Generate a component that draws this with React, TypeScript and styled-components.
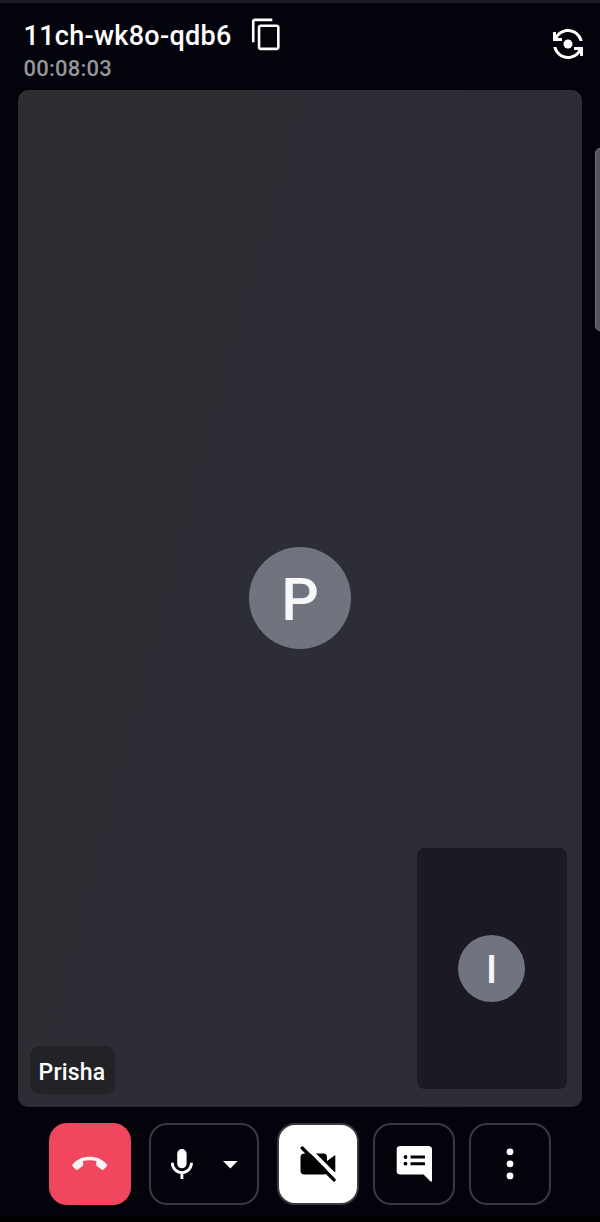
import React from "react";
import styled, { createGlobalStyle } from "styled-components";

const GlobalStyle = createGlobalStyle`
  * { box-sizing: border-box; }
  body { margin: 0; background: #03040b; }
`;

const Screen = styled.div`
  position: relative;
  width: 600px;
  height: 1222px;
  overflow: hidden;
  display: flex;
  flex-direction: column;
  background: #03040b;
  border-top: 3px solid #1a1b22;
  border-bottom: 5px solid #000;
  font-family: Roboto, "Liberation Sans", sans-serif;
  color: #fff;
`;

const Header = styled.header`
  height: 87px;
  flex: none;
  display: flex;
  justify-content: space-between;
  align-items: flex-start;
  padding: 14px 14px 0 23.5px;
`;

const Meeting = styled.div`
  display: flex;
  flex-direction: column;
`;

const TitleRow = styled.div`
  display: flex;
  align-items: center;
  height: 36px;
  gap: 18px;
`;

const Title = styled.h1`
  margin: 0;
  padding-top: 2px;
  width: 207px;
  font-size: 27px;
  font-weight: 500;
  letter-spacing: 0.3px;
  line-height: 36px;
  white-space: nowrap;
`;

const Timer = styled.div`
  font-size: 22px;
  font-weight: 500;
  letter-spacing: 0.25px;
  line-height: 26px;
  margin-top: 3px;
  color: #96969b;
`;

const IconButton = styled.button<{ $drop?: number }>`
  display: flex;
  padding: 0;
  border: 0;
  background: none;
  color: #fff;
  margin-top: ${(p) => p.$drop ?? 0}px;
`;

const Stage = styled.main`
  position: relative;
  flex: none;
  margin: 0 18px;
  height: 1016.5px;
  display: flex;
  align-items: center;
  justify-content: center;
  border-radius: 10px;
  background: linear-gradient(105deg, #2d2e32 0%, #2d2d34 25%, #2c2c36 100%);
`;

const Avatar = styled.div<{ $size: number; $font: number }>`
  width: ${(p) => p.$size}px;
  height: ${(p) => p.$size}px;
  border-radius: 50%;
  background: #70747e;
  color: #f7f7f9;
  font-size: ${(p) => p.$font}px;
  font-weight: 500;
  display: flex;
  align-items: center;
  justify-content: center;
  line-height: 1;
  padding-top: ${(p) => (p.$size > 80 ? 3 : 4)}px;
`;

const SelfView = styled.div`
  position: absolute;
  right: 15px;
  bottom: 18px;
  width: 150px;
  height: 241px;
  padding-right: 1px;
  border-radius: 8px;
  background: #1b1a24;
  display: flex;
  align-items: center;
  justify-content: center;
`;

const NameTag = styled.div`
  position: absolute;
  left: 12px;
  bottom: 12.5px;
  width: 85px;
  height: 48px;
  border-radius: 9px;
  background: #222326;
  display: flex;
  align-items: center;
  justify-content: center;
  padding: 4px 1px 0 0;
  font-size: 23px;
  font-weight: 500;
  letter-spacing: 0.2px;
`;

const Controls = styled.footer`
  display: flex;
  padding: 16.5px 49px 0;
  gap: 14px;
`;

const Control = styled.button<{
  $tone?: "danger" | "light";
  $width?: number;
  $space?: number;
}>`
  flex: none;
  width: ${(p) => p.$width ?? 82}px;
  height: 82px;
  padding: 0;
  margin-right: ${(p) => p.$space ?? 0}px;
  border-radius: 18px;
  border: ${(p) => (p.$tone === "danger" ? "0" : "2px solid #393a41")};
  background: ${(p) =>
    p.$tone === "danger" ? "#f0475f" : p.$tone === "light" ? "#fff" : "transparent"};
  color: ${(p) => (p.$tone === "light" ? "#000" : "#fff")};
  display: flex;
  align-items: center;
  justify-content: center;
`;

const EdgeHandle = styled.div`
  position: absolute;
  right: -6px;
  top: 145px;
  width: 11px;
  height: 183px;
  border-radius: 5px;
  border: 1px solid #73747a;
  background: #54555c;
`;

const CopyIcon = () => (
  <svg width="35" height="35.500" viewBox="0 0 24 24" preserveAspectRatio="none" fill="currentColor">
    <path d="M16 1H4c-1.1 0-2 .9-2 2v14h1.800V2.800H16V1zm3 4H8c-1.1 0-2 .9-2 2v13.400c0 1.1.9 2 2 2h11c1.1 0 2-.9 2-2V7c0-1.1-.9-2-2-2zm.2 15.600H7.800V6.800h11.400v13.800z" />
  </svg>
);

const FlipIcon = () => (
  <svg width="36" height="36" viewBox="0 0 24 24" fill="currentColor">
    <circle cx="12" cy="12" r="3" />
    <path d="M8 10V8H5.09C6.47 5.61 9.05 4 12 4c3.72 0 6.85 2.56 7.74 6h2.06c-.93-4.56-4.96-8-9.8-8-3.27 0-6.18 1.58-8 4.01V4H2v6h6zM16 14v2h2.91c-1.38 2.39-3.96 4-6.91 4-3.72 0-6.85-2.56-7.74-6H2.2c.93 4.56 4.96 8 9.8 8 3.27 0 6.18-1.58 8-4.01V20h2v-6h-6z" />
  </svg>
);

const HangUpIcon = () => (
  <svg width="82" height="82" viewBox="0 0 82 82" fill="#f7f4f6">
    <path d="M23.500 41.400C28 36.200 34 33.800 40.700 33.800s12.800 2.400 17.100 7.600c.5.600.5 1.200 0 1.800l-3.300 3.200c-.6.600-1.300.700-2 .2l-4.400-3.300c-.6-.4-.8-.9-.8-1.600v-3.600c-4.300-1.100-9-1.100-13.200 0v3.600c0 .7-.3 1.200-.8 1.600l-4.400 3.300c-.7.500-1.400.4-2-.2l-3.400-3.200c-.5-.6-.5-1.200 0-1.800z" />
  </svg>
);

const MicMenuIcon = () => (
  <svg width="106" height="78" viewBox="151 1125 106 78" fill="currentColor">
    <rect x="177.200" y="1149" width="9.400" height="19.300" rx="4.700" />
    <path
      d="M172.300 1162.700a9.600 9.900 0 0 0 19.200 0M181.900 1172.700v6.300"
      fill="none"
      stroke="currentColor"
      strokeWidth="2.800"
    />
    <path d="M223 1161h14.700l-7.350 7.400z" />
  </svg>
);

const VideoOffIcon = () => (
  <svg width="78" height="78" viewBox="279 1125 78 78" fill="currentColor">
    <path d="M304.500 1153.500h19a3.500 3.500 0 0 1 3.500 3.500v4l8.300-6v17.500l-8.300-6v4.500a3.500 3.500 0 0 1-3.500 3.500h-19a4 4 0 0 1-4-4v-13a4 4 0 0 1 4-4z" />
    <path d="M305.600 1145.900l31.700 31.700" stroke="#fff" strokeWidth="4" />
    <path d="M302.200 1148l31.900 31.900" stroke="#000" strokeWidth="3.400" strokeLinecap="round" />
  </svg>
);

const ChatIcon = () => (
  <svg width="78" height="78" viewBox="375 1125 78 78" fill="currentColor">
    <path d="M400.200 1146h28.300a3.500 3.500 0 0 1 3.500 3.500v31.200c0 1-1 1.300-1.700.6l-6.700-6.800h-23.400a3.500 3.500 0 0 1-3.500-3.500v-21.500a3.500 3.500 0 0 1 3.500-3.500z" />
    <g fill="#03040b">
      <circle cx="405.500" cy="1157" r="1.900" />
      <circle cx="405.500" cy="1163.700" r="1.900" />
      <rect x="410.500" y="1155.500" width="14.500" height="3" rx=".5" />
      <rect x="410.500" y="1162.200" width="14.500" height="3" rx=".5" />
    </g>
  </svg>
);

const MoreIcon = () => (
  <svg width="78" height="78" viewBox="471 1125 78 78" fill="currentColor">
    <circle cx="510" cy="1151.800" r="3.400" />
    <circle cx="510" cy="1163.800" r="3.400" />
    <circle cx="510" cy="1175.900" r="3.400" />
  </svg>
);

export default function App() {
  return (
    <>
      <GlobalStyle />
      <Screen>
        <Header>
          <Meeting>
            <TitleRow>
              <Title>11ch-wk8o-qdb6</Title>
              <IconButton aria-label="Copy meeting code">
                <CopyIcon />
              </IconButton>
            </TitleRow>
            <Timer>00:08:03</Timer>
          </Meeting>
          <IconButton aria-label="Switch camera" $drop={9}>
            <FlipIcon />
          </IconButton>
        </Header>
        <Stage>
          <Avatar $size={102} $font={59}>P</Avatar>
          <NameTag>Prisha</NameTag>
          <SelfView>
            <Avatar $size={67} $font={39}>I</Avatar>
          </SelfView>
        </Stage>
        <Controls>
          <Control $tone="danger" $space={4} aria-label="Leave call">
            <HangUpIcon />
          </Control>
          <Control $width={110} $space={4} aria-label="Microphone">
            <MicMenuIcon />
          </Control>
          <Control $tone="light" aria-label="Turn camera on">
            <VideoOffIcon />
          </Control>
          <Control aria-label="Chat">
            <ChatIcon />
          </Control>
          <Control aria-label="More options">
            <MoreIcon />
          </Control>
        </Controls>
        <EdgeHandle />
      </Screen>
    </>
  );
}
